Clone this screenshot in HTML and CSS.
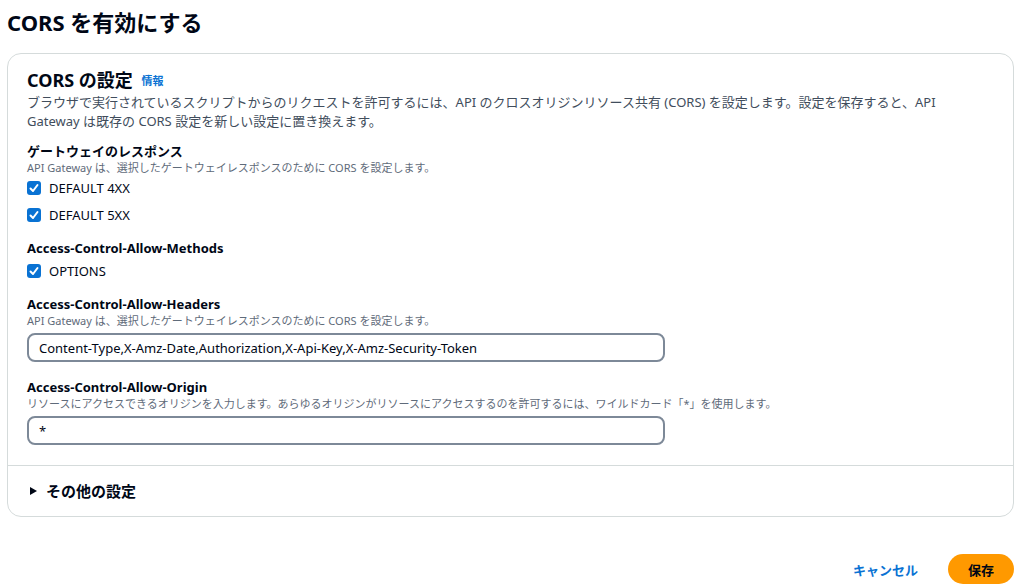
FILE: index.html
```html
<!DOCTYPE html>
<html lang="ja">

<head>
    <meta charset="UTF-8">
    <meta name="viewport" content="width=device-width, initial-scale=1.0">
    <title>CORS を有効にする</title>
    <link rel="stylesheet" href="styles.css">
</head>

<body>
    <h1 class="page-title">CORS を有効にする</h1>

    <div class="card">
        <div class="card-body">
            <h2 class="card-title">CORS の設定 <a class="info" href="#">情報</a></h2>
            <p class="desc">ブラウザで実行されているスクリプトからのリクエストを許可するには、API のクロスオリジンリソース共有 (CORS) を設定します。設定を保存すると、API Gateway は既存の CORS 設定を新しい設定に置き換えます。</p>

            <div class="field first">
                <div class="label">ゲートウェイのレスポンス</div>
                <div class="help">API Gateway は、選択したゲートウェイレスポンスのために CORS を設定します。</div>
                <div class="checks">
                    <label class="check"><span class="box"><svg viewBox="0 0 14 14" width="14" height="14"><polyline points="3.5,7.5 6,10 10.5,4" /></svg></span>DEFAULT 4XX</label>
                    <label class="check"><span class="box"><svg viewBox="0 0 14 14" width="14" height="14"><polyline points="3.5,7.5 6,10 10.5,4" /></svg></span>DEFAULT 5XX</label>
                </div>
            </div>

            <div class="field">
                <div class="label">Access-Control-Allow-Methods</div>
                <div class="checks tight">
                    <label class="check"><span class="box"><svg viewBox="0 0 14 14" width="14" height="14"><polyline points="3.5,7.5 6,10 10.5,4" /></svg></span>OPTIONS</label>
                </div>
            </div>

            <div class="field">
                <div class="label">Access-Control-Allow-Headers</div>
                <div class="help">API Gateway は、選択したゲートウェイレスポンスのために CORS を設定します。</div>
                <input class="text" type="text" value="Content-Type,X-Amz-Date,Authorization,X-Api-Key,X-Amz-Security-Token">
            </div>

            <div class="field origin">
                <div class="label">Access-Control-Allow-Origin</div>
                <div class="help">リソースにアクセスできるオリジンを入力します。あらゆるオリジンがリソースにアクセスするのを許可するには、ワイルドカード「*」を使用します。</div>
                <input class="text" type="text" value="*">
            </div>
        </div>

        <div class="more">
            <span class="caret"></span>その他の設定
        </div>
    </div>

    <div class="actions">
        <button class="cancel">キャンセル</button>
        <button class="save">保存</button>
    </div>
</body>

</html>
```

FILE: styles.css
```css
body{
    margin: 0;
    padding: 8px 10px 0 7px;
    font-family: "Noto Sans", "Noto Sans CJK JP", sans-serif;
    color: #000716;
    background-color: #fff;
}
.page-title{
    margin: 0;
    font-size: 22px;
    line-height: 28px;
    font-weight: 700;
}
.card{
    margin-top: 17px;
    border: 1px solid #d5dbdb;
    border-radius: 14px;
}
.card-body{
    padding: 14px 19px 20px 19px;
    border-bottom: 1px solid #d5dbdb;
}
.card-title{
    margin: 0;
    font-size: 18px;
    line-height: 24px;
    font-weight: 700;
}
.info{
    margin-left: 4px;
    font-size: 11px;
    font-weight: 700;
    color: #0972d3;
    text-decoration: none;
    vertical-align: 2px;
}
.desc{
    margin: 0;
    max-width: 945px;
    font-size: 13px;
    line-height: 19px;
    color: #414d5c;
}
.field{
    margin-top: 14px;
}
.field.first{
    margin-top: 11px;
}
.field.origin{
    margin-top: 16px;
}
.label{
    font-size: 13px;
    line-height: 18px;
    font-weight: 700;
}
.help{
    font-size: 11px;
    line-height: 16px;
    color: #5f6b7a;
}
.checks{
    display: flex;
    flex-direction: column;
    gap: 7px;
    margin-top: 2px;
}
.checks.tight{
    margin-top: 4px;
}
.check{
    display: flex;
    align-items: center;
    gap: 8px;
    height: 20px;
    font-size: 13px;
}
.box{
    width: 14px;
    height: 14px;
    border-radius: 3px;
    background-color: #0972d3;
    display: flex;
}
.box polyline{
    fill: none;
    stroke: #fff;
    stroke-width: 2;
    stroke-linecap: round;
    stroke-linejoin: round;
}
.text{
    display: block;
    box-sizing: border-box;
    width: 638px;
    height: 29px;
    margin: 4px 0 0 0;
    padding: 0 10px;
    border: 2px solid #7d8998;
    border-radius: 8px;
    font-family: "Noto Sans", "Noto Sans CJK JP", sans-serif;
    font-size: 13px;
    color: #000716;
}
.more{
    display: flex;
    align-items: center;
    padding: 16px 22px 16px 22px;
    font-size: 15px;
    line-height: 18px;
    font-weight: 700;
}
.caret{
    width: 0;
    height: 0;
    border-top: 4.5px solid transparent;
    border-bottom: 4.5px solid transparent;
    border-left: 7px solid #000716;
    margin-right: 9px;
}
.actions{
    display: flex;
    justify-content: flex-end;
    align-items: center;
    gap: 30px;
    margin-top: 37px;
}
.actions button{
    font-family: "Noto Sans", "Noto Sans CJK JP", sans-serif;
    font-size: 13px;
    font-weight: 700;
    border: none;
    cursor: pointer;
}
.cancel{
    background: none;
    color: #0972d3;
    padding: 0;
}
.save{
    height: 30px;
    padding: 0 20px;
    border-radius: 16px;
    background-color: #ff9900;
    color: #000716;
}
```
